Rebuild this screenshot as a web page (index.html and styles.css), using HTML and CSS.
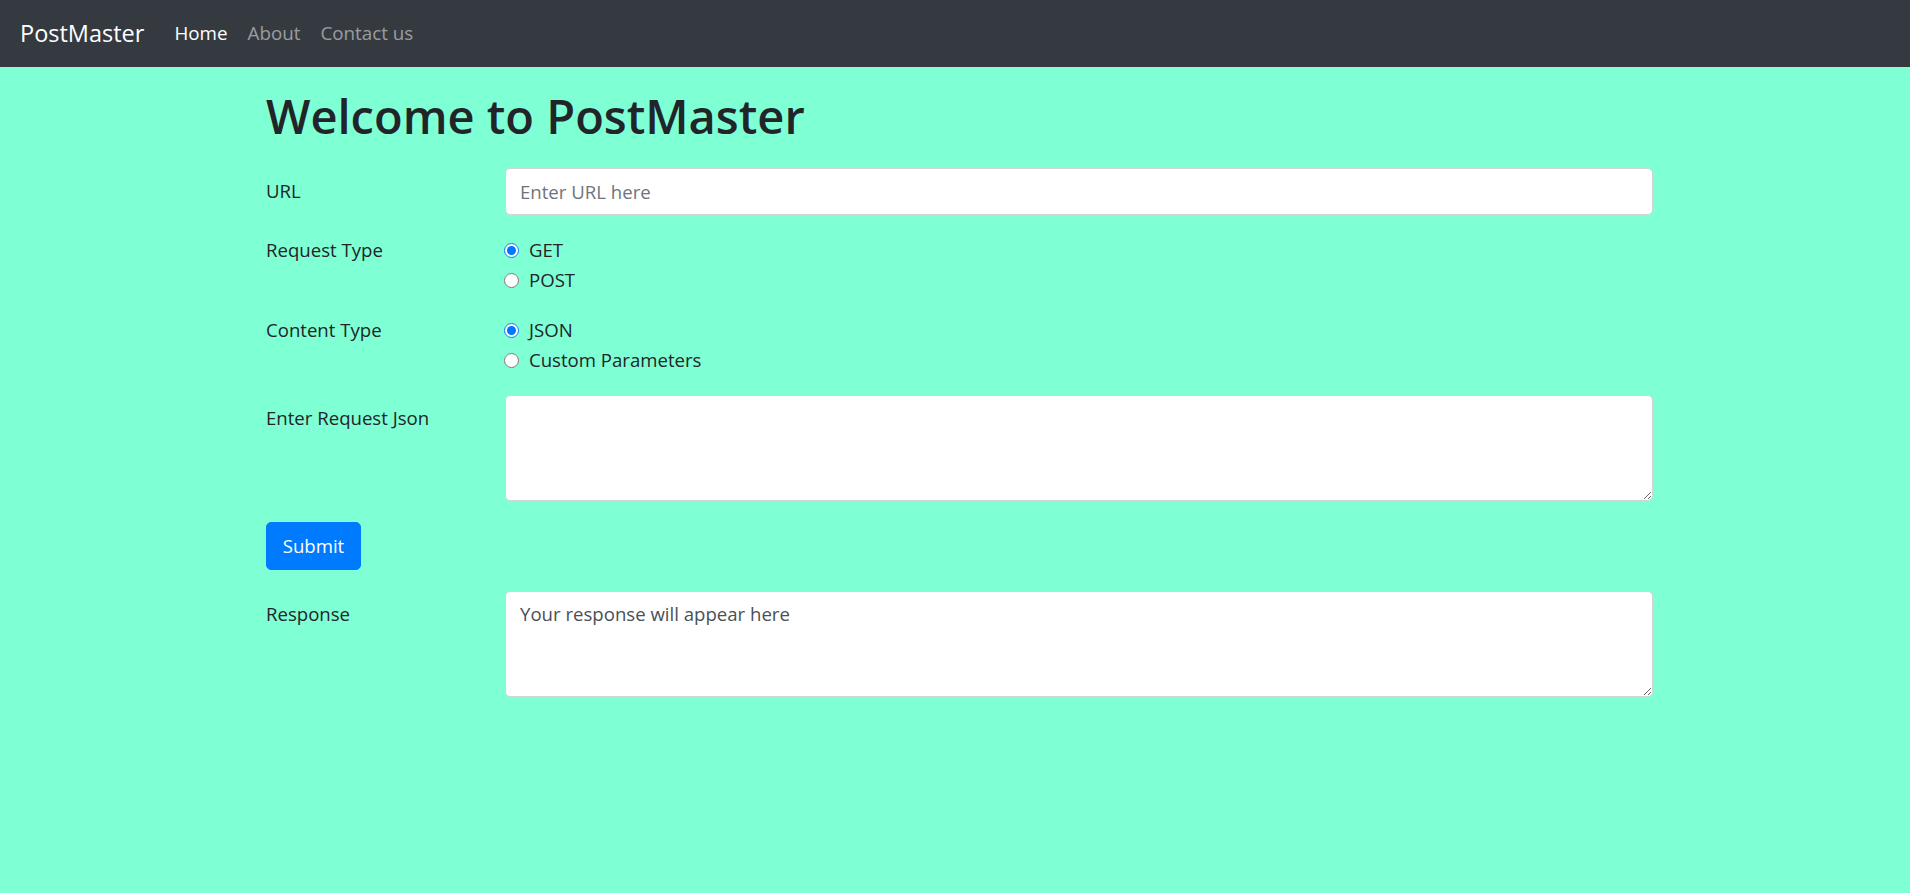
FILE: index.html
```html
<!DOCTYPE html>
<html lang="en">
<head>
<meta charset="utf-8">
<title>PostMaster</title>
<link rel="stylesheet" href="styles.css">
</head>
<body>
<nav class="navbar">
  <a class="brand" href="#">PostMaster</a>
  <ul class="nav-links">
    <li><a class="nav-link active" href="#">Home</a></li>
    <li><a class="nav-link" href="#">About</a></li>
    <li><a class="nav-link" href="#">Contact us</a></li>
  </ul>
</nav>
<main class="container">
  <h1 class="title">Welcome to PostMaster</h1>
  <div class="form-row">
    <label class="form-label" for="url">URL</label>
    <div class="form-field">
      <input class="form-control" id="url" type="text" placeholder="Enter URL here">
    </div>
  </div>
  <div class="form-row">
    <div class="form-label">Request Type</div>
    <div class="form-field">
      <label class="check"><input type="radio" name="req" checked> GET</label>
      <label class="check"><input type="radio" name="req"> POST</label>
    </div>
  </div>
  <div class="form-row">
    <div class="form-label">Content Type</div>
    <div class="form-field">
      <label class="check"><input type="radio" name="ct" checked> JSON</label>
      <label class="check"><input type="radio" name="ct"> Custom Parameters</label>
    </div>
  </div>
  <div class="form-row">
    <label class="form-label pad" for="json">Enter Request Json</label>
    <div class="form-field">
      <textarea class="form-control area" id="json"></textarea>
    </div>
  </div>
  <div class="form-row btn-row">
    <button class="btn" type="button">Submit</button>
  </div>
  <div class="form-row">
    <label class="form-label pad" for="resp">Response</label>
    <div class="form-field">
      <textarea class="form-control area resp" id="resp">Your response will appear here</textarea>
    </div>
  </div>
</main>
</body>
</html>
```
FILE: styles.css
```css
* { box-sizing: border-box; }
html, body { margin: 0; padding: 0; }
body {
  background: #7fffd4;
  font-family: "Open Sans", "Noto Sans", sans-serif;
  font-size: 18.6px;
  line-height: 30px;
  color: #212529;
  min-height: 893px;
}
.navbar {
  height: 67px;
  background: #343a40;
  display: flex;
  align-items: center;
  padding: 0 20px 1px;
}
.brand {
  color: #fff;
  text-decoration: none;
  font-size: 23.5px;
  line-height: 37px;
  margin-right: 20px;
}
.nav-links {
  list-style: none;
  margin: 0;
  padding: 0;
  display: flex;
}
.nav-link {
  display: block;
  padding: 0 10px;
  font-size: 18.8px;
  color: rgba(255, 255, 255, 0.5);
  text-decoration: none;
}
.nav-link.active { color: #fff; }
.container {
  width: 1387px;
  margin-left: 266px;
}
.title {
  font-size: 47px;
  font-weight: 600;
  line-height: 55px;
  margin: 22px 0 24px;
}
.form-row {
  display: flex;
  margin-bottom: 20px;
}
.form-row.btn-row { margin-bottom: 21px; }
.form-label {
  width: 239px;
  flex: none;
}
label.form-label { padding-top: 8px; }
.form-field { flex: 1; }
.form-control {
  display: block;
  width: 100%;
  height: 47px;
  padding: 0 14px;
  font-family: inherit;
  font-size: 18.6px;
  color: #495057;
  background: #fff;
  border: 1px solid #ced4da;
  border-radius: 5px;
  outline: none;
}
.form-control::placeholder { color: #6c757d; }
.area {
  height: 106px;
  padding: 7px 14px;
  line-height: 30px;
}
.check {
  display: flex;
  align-items: center;
  height: 30px;
}
.check input {
  width: 15px;
  height: 15px;
  margin: 0 10px 0 -1px;
}
.btn {
  background: #007bff;
  color: #fff;
  border: 1px solid #007bff;
  border-radius: 5px;
  font-family: inherit;
  font-size: 18.6px;
  line-height: 30px;
  height: 48px;
  width: 95px;
  padding: 0;
  margin-top: 1px;
}
```
